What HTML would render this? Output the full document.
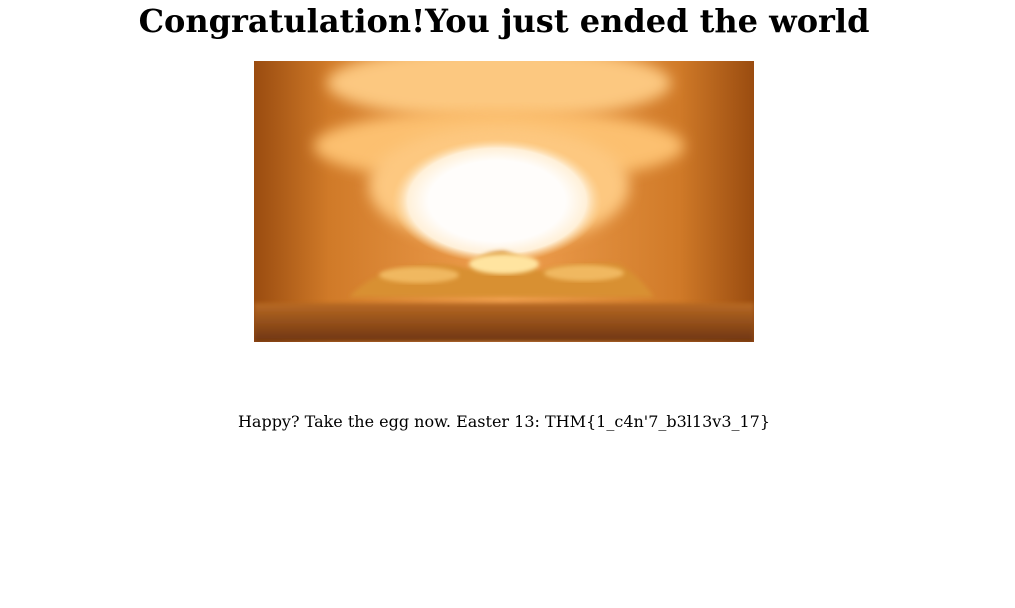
<!DOCTYPE html>
<html><head><meta charset="utf-8"><style>
html,body{margin:0;padding:0;background:#fff;width:1015px;height:608px;overflow:hidden}
h1{position:absolute;left:0;width:1008px;top:2px;margin:0;text-align:center;font:bold 32px "DejaVu Serif",serif;color:#000}
svg{position:absolute;left:254px;top:61px}
p{position:absolute;left:0;width:1008px;top:412px;margin:0;text-align:center;font:16px "DejaVu Serif",serif;color:#000}
</style></head><body>
<h1>Congratulation!You just ended the world</h1>
<svg width="500" height="281" viewBox="0 0 500 281">
<defs>
<linearGradient id="bg" x1="0" x2="1" y1="0" y2="0">
<stop offset="0" stop-color="#9a4c10"/><stop offset="0.15" stop-color="#d07a28"/><stop offset="0.5" stop-color="#f0a050"/><stop offset="0.85" stop-color="#d07a28"/><stop offset="1" stop-color="#9a4c10"/></linearGradient>
<linearGradient id="gr" x1="0" x2="0" y1="0" y2="1"><stop offset="0" stop-color="#b86a24"/><stop offset="1" stop-color="#6e3410"/></linearGradient>
<radialGradient id="core"><stop offset="0.65" stop-color="#fffdfb"/><stop offset="0.85" stop-color="#fff0d8"/><stop offset="1" stop-color="#fcd8a0" stop-opacity="0"/></radialGradient>
<filter id="b"><feGaussianBlur stdDeviation="7"/></filter>
<filter id="b2"><feGaussianBlur stdDeviation="2"/></filter>
</defs>
<rect width="500" height="281" fill="url(#bg)"/>
<ellipse cx="245" cy="22" rx="172" ry="36" fill="#fcc880" filter="url(#b)"/>
<ellipse cx="245" cy="85" rx="185" ry="36" fill="#fcc070" filter="url(#b)"/>
<ellipse cx="245" cy="125" rx="130" ry="60" fill="#fdc880" filter="url(#b)"/>
<ellipse cx="243" cy="140" rx="105" ry="62" fill="url(#core)"/>
<rect y="242" width="500" height="39" fill="url(#gr)" filter="url(#b2)"/>
<path d="M95 236 Q120 210 160 205 Q190 200 215 208 Q225 190 250 190 Q270 195 285 210 Q320 200 365 203 Q385 215 400 236 Z" fill="#d89030" filter="url(#b2)"/>
<ellipse cx="250" cy="203" rx="35" ry="10" fill="#ffe4a0" filter="url(#b2)"/>
<ellipse cx="330" cy="212" rx="40" ry="8" fill="#f0b860" filter="url(#b2)"/>
<ellipse cx="165" cy="214" rx="40" ry="8" fill="#f0b860" filter="url(#b2)"/>
</svg>
<p>Happy? Take the egg now. Easter 13: THM{1_c4n'7_b3l13v3_17}</p>
</body></html>
